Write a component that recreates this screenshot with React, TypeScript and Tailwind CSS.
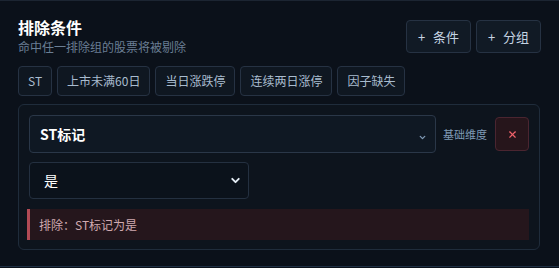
import { ChevronDown, X } from "lucide-react";

const chips = ["ST", "上市未满60日", "当日涨跌停", "连续两日涨停", "因子缺失"];

const font = { fontFamily: '"Noto Sans CJK SC", "Noto Sans", sans-serif' };

export default function App() {
  return (
    <div className="h-[268px] w-[559px] overflow-hidden bg-[#0b111a] text-white" style={font}>
      <div className="h-[267px] border-t border-b border-t-[#1c2532] border-b-[#1f3044] px-[18px] pt-[14px]">
        {/* header */}
        <div className="flex items-start justify-between">
          <div>
            <h2 className="text-[16px] leading-[24px] font-bold text-white">排除条件</h2>
            <p className="text-[12px] leading-[16px] text-[#6a7e94]">命中任一排除组的股票将被剔除</p>
          </div>
          <div className="mt-[5px] flex gap-[5px]">
            <button className="flex h-[33px] w-[65px] items-center justify-center gap-[8px] rounded-[4px] border border-[#263243] bg-[#111a25] text-[13px] text-[#c5d3e2]">
              <span>+</span>
              <span>条件</span>
            </button>
            <button className="flex h-[33px] w-[65px] items-center justify-center gap-[8px] rounded-[4px] border border-[#263243] bg-[#111a25] text-[13px] text-[#c5d3e2]">
              <span>+</span>
              <span>分组</span>
            </button>
          </div>
        </div>

        {/* chips */}
        <div className="mt-[11px] flex gap-[5px]">
          {chips.map((c) => (
            <span
              key={c}
              className="flex h-[30px] items-center rounded-[4px] border border-[#263243] bg-[#0f1721] px-[9px] text-[12px] text-[#a9bccf]"
            >
              {c}
            </span>
          ))}
        </div>

        {/* group card */}
        <div className="mt-[8px] flex h-[146px] w-[522px] flex-col rounded-[6px] border border-[#1f2c3b] bg-[#0d141d] px-[10px] pt-[10px]">
          <div className="flex items-center">
            <div className="flex h-[38px] w-[407px] items-center justify-between rounded-[4px] border border-[#2a3748] bg-[#0f1823] pr-[8px] pl-[10px]">
              <span className="text-[14px] font-bold text-white">ST标记</span>
              <ChevronDown size={9} strokeWidth={3.5} className="mt-[7px] text-[#7f9ab5]" />
            </div>
            <span className="ml-[7px] text-[11px] text-[#7f9ab5]">基础维度</span>
            <button className="ml-[8px] flex h-[34px] w-[34px] items-center justify-center rounded-[4px] border border-[#4a2530] bg-[#26151b]">
              <X size={11} strokeWidth={2.5} className="text-[#f0626b]" />
            </button>
          </div>
          <div className="mt-[9px] flex h-[37px] w-[220px] items-center justify-between rounded-[4px] border border-[#243040] bg-[#0b121b] pr-[6px] pl-[14px]">
            <span className="text-[14px] text-white">是</span>
            <ChevronDown size={13} strokeWidth={3.5} className="text-[#e5edf5]" />
          </div>
          <div className="mt-[10px] -ml-[2px] flex h-[31px] w-[502px] items-center border-l-[3px] border-l-[#b04a55] bg-[#25161c] pl-[9px] text-[12px] text-[#d0aab0]">
            排除：ST标记为是
          </div>
        </div>
      </div>
    </div>
  );
}
